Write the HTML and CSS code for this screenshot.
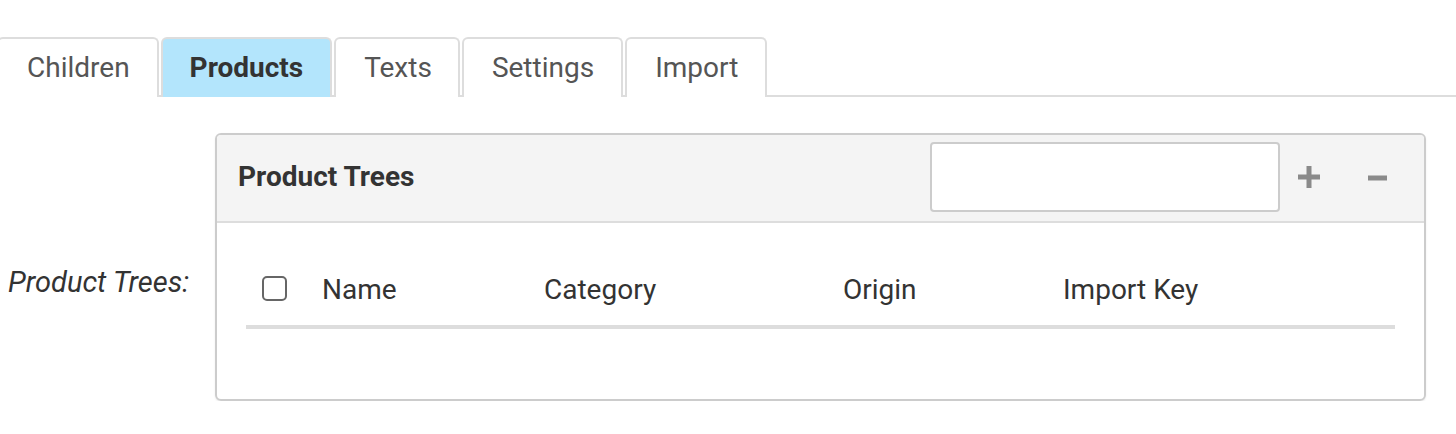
FILE: index.html
```html
<!DOCTYPE html>
<html>
<head>
<meta charset="utf-8">
<link rel="stylesheet" href="styles.css">
</head>
<body>
<div class="tabs">
  <div class="tab first">Children</div>
  <div class="tab active">Products</div>
  <div class="tab narrow">Texts</div>
  <div class="tab">Settings</div>
  <div class="tab">Import</div>
</div>
<div class="form-row">
  <div class="label">Product Trees:</div>
  <div class="panel">
    <div class="panel-head">
      <div class="title">Product Trees</div>
      <div class="search"></div>
      <div class="icon-btn plus"><svg width="22" height="22" viewBox="0 0 22 22"><rect x="8.5" y="0" width="5" height="22" fill="#8a8a8a"/><rect x="0" y="8.5" width="22" height="5" fill="#8a8a8a"/></svg></div>
      <div class="icon-btn minus"><svg width="19" height="22" viewBox="0 0 19 22"><rect x="0" y="8.5" width="19" height="5" fill="#8a8a8a"/></svg></div>
    </div>
    <div class="panel-body">
      <div class="thead">
        <div class="cell check"><span class="checkbox"></span></div>
        <div class="cell">Name</div>
        <div class="cell">Category</div>
        <div class="cell">Origin</div>
        <div class="cell">Import Key</div>
      </div>
    </div>
  </div>
</div>
</body>
</html>
```
FILE: styles.css
```css
html, body {
  margin: 0;
  background: #fff;
}
body {
  font-family: Roboto, "Liberation Sans", sans-serif;
  color: #333;
}
.tabs {
  display: flex;
  gap: 2px;
  margin-top: 37px;
  border-bottom: 2px solid #dddddd;
  height: 58px;
  align-items: stretch;
}
.tab {
  box-sizing: border-box;
  height: 60px;
  margin-bottom: -2px;
  border: 2px solid #dddddd;
  border-bottom: none;
  border-radius: 6px 6px 0 0;
  padding: 0 27px 2px 28px;
  font-size: 28px;
  color: #555;
  display: flex;
  align-items: center;
  background: #fff;
}
.tab.first {
  margin-left: -3px;
  padding-right: 27px;
  padding-left: 28px;
}
.tab.narrow {
  padding-left: 28px;
  padding-right: 26px;
}
.tab.active {
  background: #b3e5fc;
  font-weight: bold;
  color: #333;
  padding-left: 27px;
  padding-right: 27px;
}
.form-row {
  display: flex;
  align-items: flex-start;
  margin-top: 36px;
}
.label {
  width: 215px;
  box-sizing: border-box;
  padding-left: 8px;
  padding-top: 132px;
  font-style: italic;
  font-size: 29px;
  color: #333;
}
.panel {
  box-sizing: border-box;
  width: 1211px;
  height: 268px;
  border: 2px solid #cccccc;
  border-radius: 6px;
  overflow: hidden;
  box-shadow: 0 1px 2px rgba(0,0,0,0.08);
}
.panel-head {
  background: #f4f4f4;
  height: 86px;
  border-bottom: 2px solid #dddddd;
  display: flex;
  align-items: center;
  padding: 0 0 0 21px;
}
.title {
  font-weight: bold;
  font-size: 28px;
  color: #333;
  flex: 1;
  margin-top: -3px;
}
.search {
  box-sizing: border-box;
  width: 350px;
  height: 70px;
  background: #fff;
  border: 2px solid #cccccc;
  border-radius: 4px;
  margin-right: 18px;
  margin-top: -2px;
}
.icon-btn {
  display: flex;
  align-items: center;
}
.icon-btn svg { display: block; }
.plus { margin-right: 48px; margin-top: -2px; }
.minus { margin-right: 37px; margin-top: 0; }
.panel-body {
  padding: 0 29px 0 29px;
}
.thead {
  display: grid;
  grid-template-columns: 76px 222px 299px 220px 1fr;
  height: 106px;
  border-bottom: 4px solid #dddddd;
  align-items: center;
  font-size: 28px;
  color: #333;
  box-sizing: border-box;
  padding-top: 35px;
  padding-bottom: 0;
}
.cell {
  line-height: 32px;
  height: 70px;
  display: flex;
  align-items: center;
  padding-bottom: 6px;
  box-sizing: border-box;
}
.check { padding-left: 16px; }
.checkbox {
  display: block;
  box-sizing: border-box;
  width: 25px;
  height: 25px;
  border: 2px solid #666;
  border-radius: 5px;
  background: #fff;
  margin-top: -3px;
}
```
